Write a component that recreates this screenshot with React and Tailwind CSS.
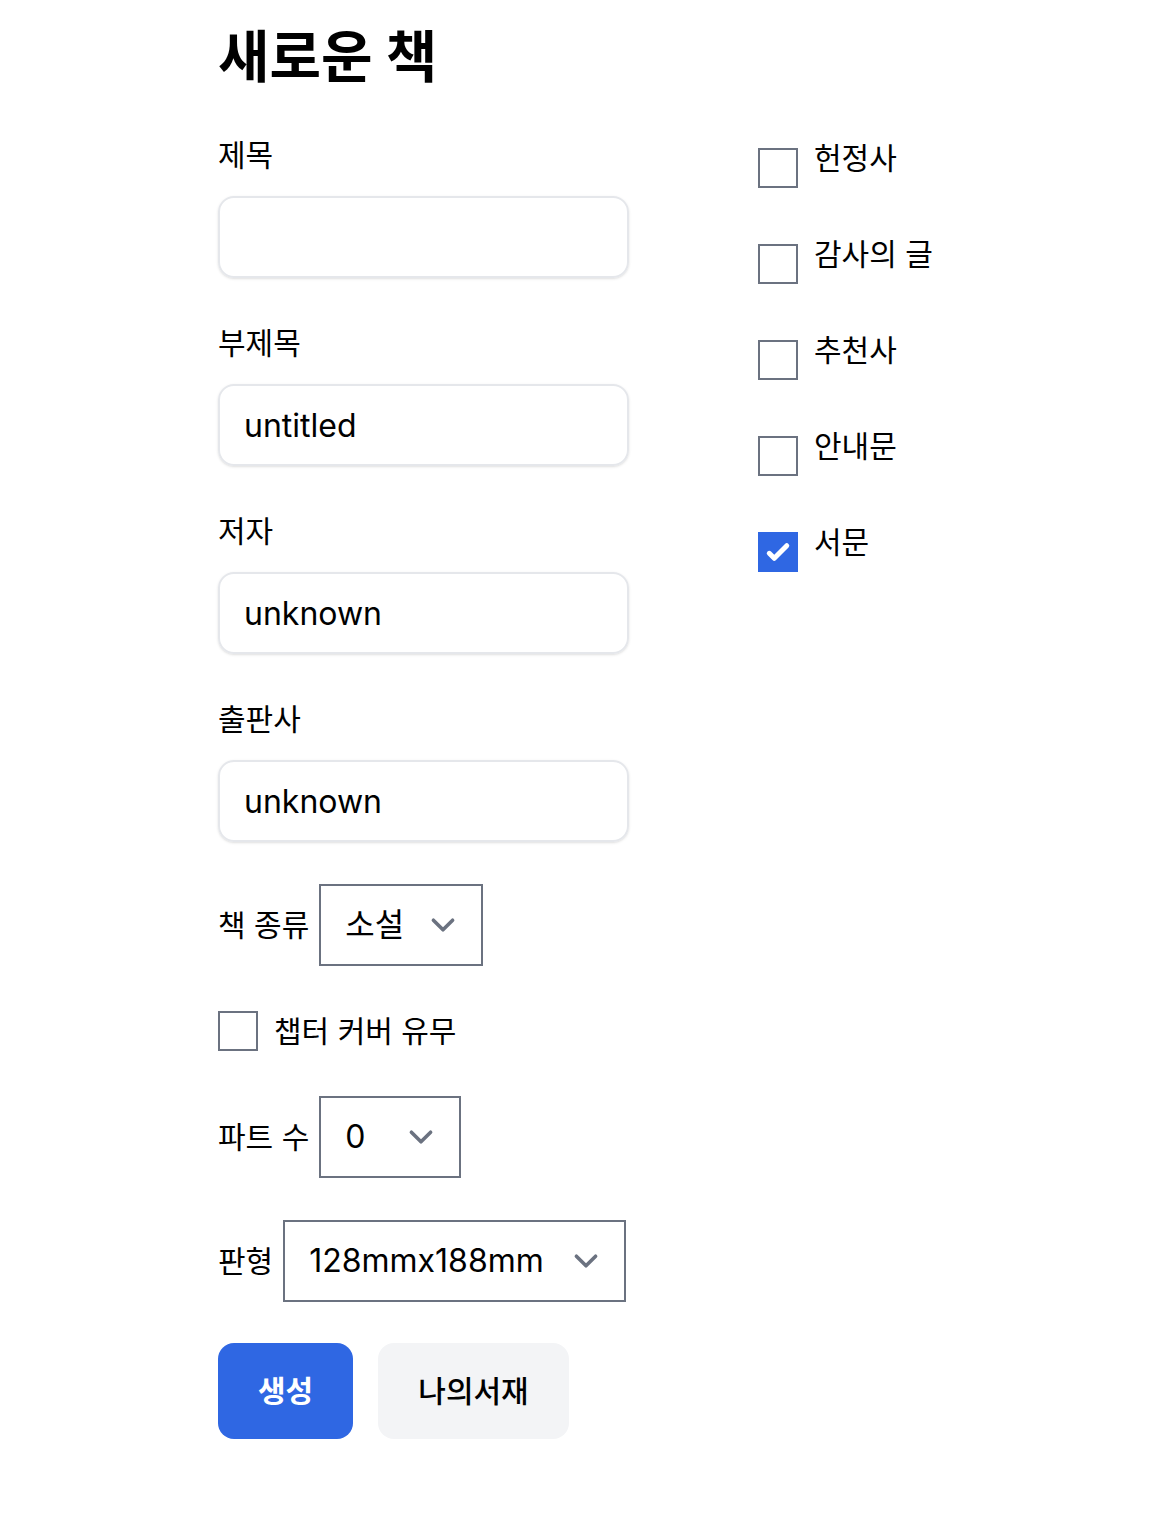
import { useState } from 'react';

const font = { fontFamily: 'Inter, "Noto Sans CJK KR", sans-serif' };

function Chevron() {
  return (
    <svg width="48" height="48" viewBox="0 0 20 20" fill="none" className="shrink-0">
      <path d="M6 8l4 4 4-4" stroke="#6b7280" strokeWidth="1.5" strokeLinecap="round" strokeLinejoin="round" />
    </svg>
  );
}

function Box({ checked, onClick, className = '' }) {
  if (checked) {
    return (
      <button onClick={onClick} className={`block w-10 h-10 shrink-0 bg-[#2f67e3] flex items-center justify-center ${className}`}>
        <svg width="40" height="40" viewBox="0 0 16 16" fill="white">
          <path d="M12.207 4.793a1 1 0 010 1.414l-5 5a1 1 0 01-1.414 0l-2-2a1 1 0 011.414-1.414L6.5 9.086l4.293-4.293a1 1 0 011.414 0z" />
        </svg>
      </button>
    );
  }
  return <button onClick={onClick} className={`block w-10 h-10 shrink-0 border-2 border-[#6b7280] bg-white ${className}`} />;
}

function Field({ label, value, first }) {
  return (
    <div className={first ? '' : 'mt-[45px]'}>
      <div className="text-[30px] leading-[40px] text-black">{label}</div>
      <input
        defaultValue={value}
        className="block mt-[21px] w-[411px] h-[82px] border-2 border-[#e5e7eb] rounded-2xl shadow-sm px-[24px] text-[32px] text-black outline-none"
        style={font}
      />
    </div>
  );
}

function SelectBox({ value, width }) {
  return (
    <div className={`h-[82px] border-2 border-[#6b7280] flex items-center justify-between pl-[24px] pr-[14px] text-[32px] text-black ${width}`}>
      <span>{value}</span>
      <Chevron />
    </div>
  );
}

export default function App() {
  const [checks, setChecks] = useState([false, false, false, false, true]);
  const [chapterCover, setChapterCover] = useState(false);
  const items = ['헌정사', '감사의 글', '추천사', '안내문', '서문'];

  const toggle = (i) => setChecks(checks.map((c, j) => (j === i ? !c : c)));

  return (
    <div className="min-h-screen bg-white pl-[218px] pt-[15px] pb-10 text-black" style={font}>
      <h1 className="text-[56px] font-bold leading-[84px]">새로운 책</h1>

      <div className="flex mt-[36px]">
        {/* left column */}
        <div className="w-[411px]">
          <Field label="제목" value="" first />
          <Field label="부제목" value="untitled" />
          <Field label="저자" value="unknown" />
          <Field label="출판사" value="unknown" />

          <div className="mt-[42px] flex items-center gap-[10px]">
            <span className="text-[30px] leading-[40px]">책 종류</span>
            <SelectBox value="소설" width="w-[164px]" />
          </div>

          <div className="mt-[45px] flex items-center gap-[16px]">
            <Box checked={chapterCover} onClick={() => setChapterCover(!chapterCover)} />
            <span className="text-[30px] leading-[40px]">챕터 커버 유무</span>
          </div>

          <div className="mt-[45px] flex items-center gap-[10px]">
            <span className="text-[30px] leading-[40px]">파트 수</span>
            <SelectBox value="0" width="w-[142px]" />
          </div>

          <div className="mt-[42px] flex items-center gap-[10px]">
            <span className="text-[30px] leading-[40px]">판형</span>
            <SelectBox value="128mmx188mm" width="w-[343px]" />
          </div>

          <div className="mt-[41px] flex gap-[25px]">
            <button className="h-[96px] w-[135px] rounded-2xl bg-[#2f67e3] text-white text-[30px] font-bold">생성</button>
            <button className="h-[96px] w-[191px] rounded-2xl bg-[#f3f4f6] text-black text-[30px] font-medium">나의서재</button>
          </div>
        </div>

        {/* right column */}
        <div className="ml-[129px] pt-[3px] flex flex-col gap-[56px]">
          {items.map((label, i) => (
            <div key={label} className="flex items-start gap-[16px] h-[40px]">
              <Box checked={checks[i]} onClick={() => toggle(i)} className="mt-[10px]" />
              <span className="text-[30px] leading-[40px]">{label}</span>
            </div>
          ))}
        </div>
      </div>
    </div>
  );
}
